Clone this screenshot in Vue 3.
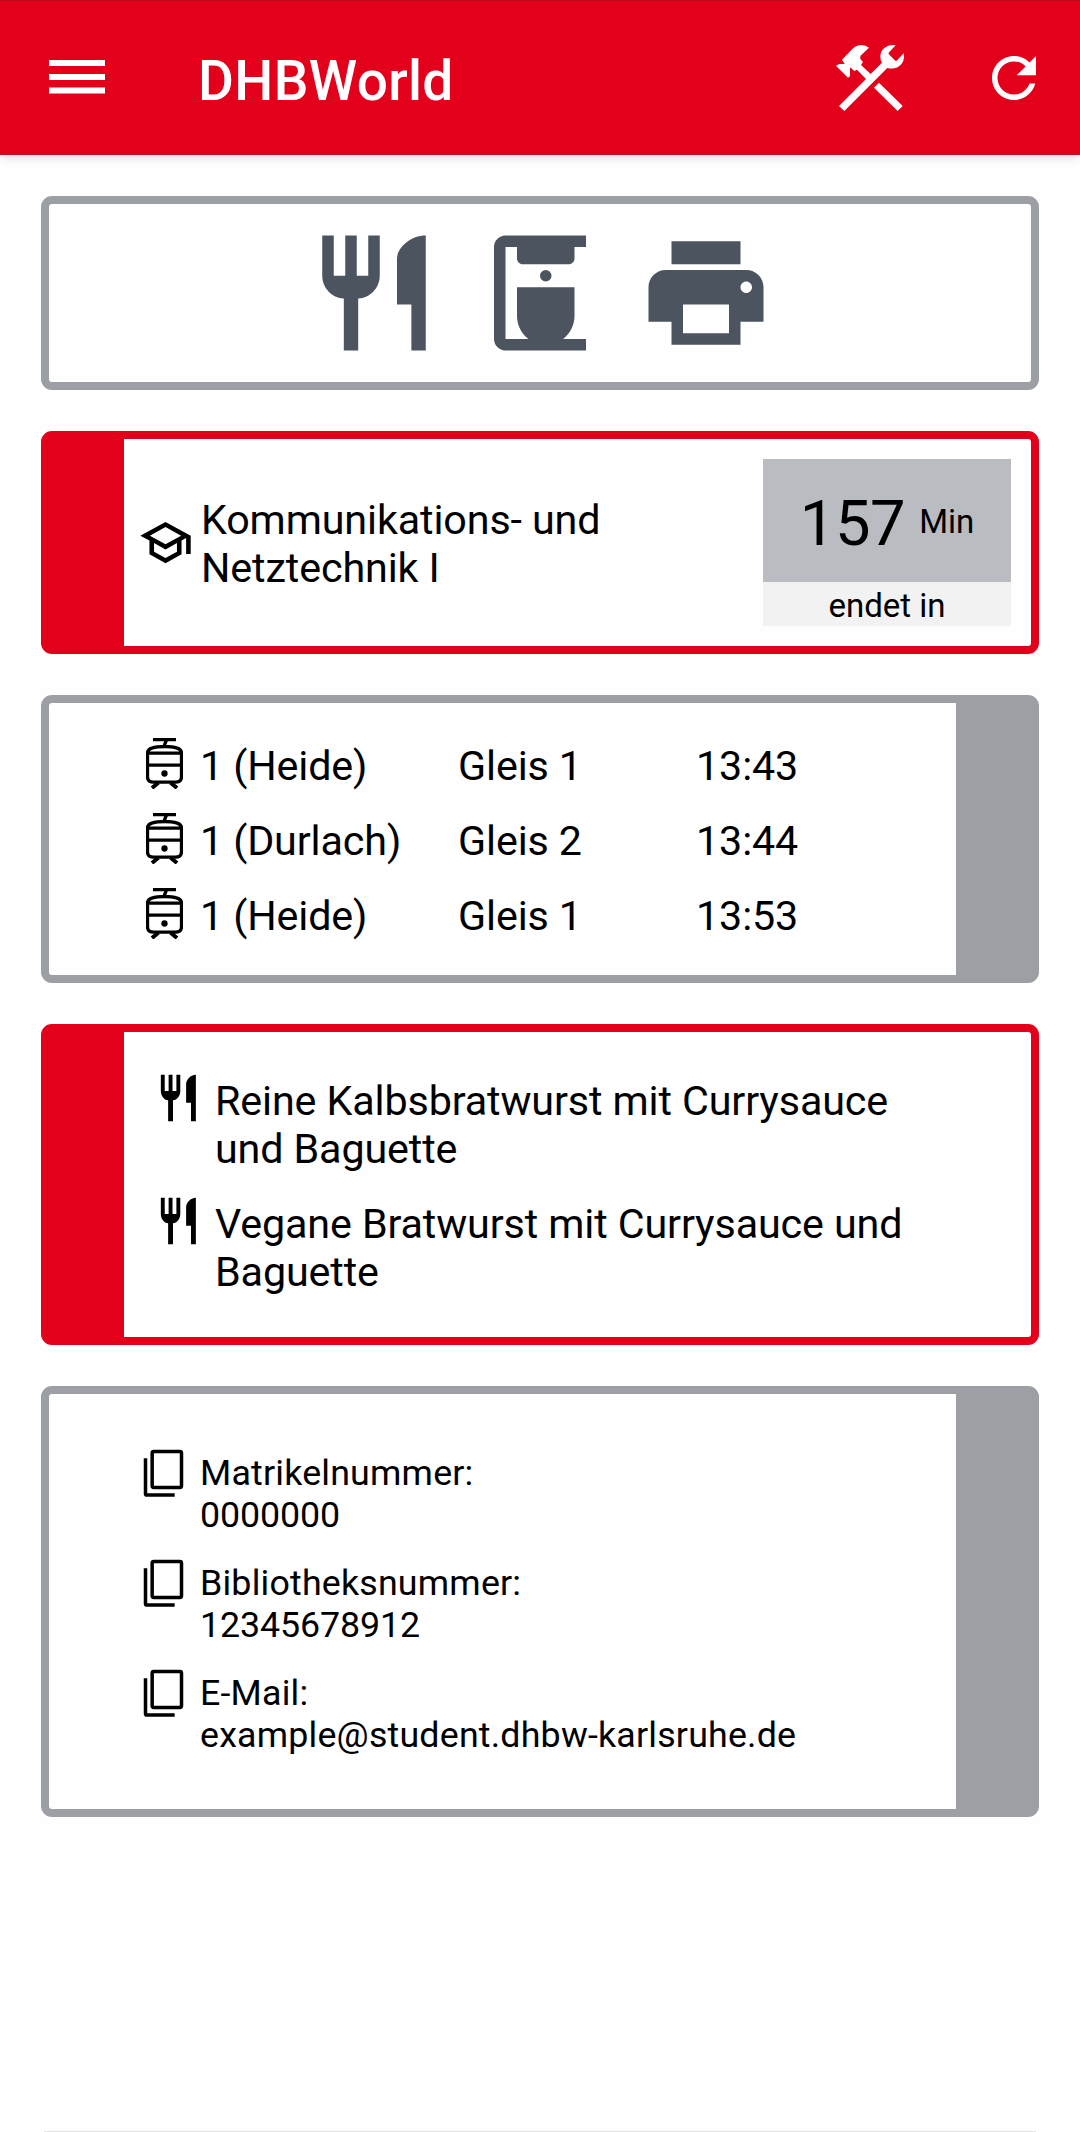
<script setup>
const departures = [
  { line: '1 (Heide)', platform: 'Gleis 1', time: '13:43' },
  { line: '1 (Durlach)', platform: 'Gleis 2', time: '13:44' },
  { line: '1 (Heide)', platform: 'Gleis 1', time: '13:53' },
]
const meals = [
  'Reine Kalbsbratwurst mit Currysauce und Baguette',
  'Vegane Bratwurst mit Currysauce und Baguette',
]
const infos = [
  { label: 'Matrikelnummer:', value: '0000000', numeric: true },
  { label: 'Bibliotheksnummer:', value: '12345678912', numeric: true },
  { label: 'E-Mail:', value: 'example@student.dhbw-karlsruhe.de', numeric: false },
]
const cutlery =
  'M11 9H9V2H7v7H5V2H3v7c0 2.12 1.66 3.84 3.75 3.97V22h2.5v-9.03C11.34 12.84 13 11.12 13 9V2h-2v7zm5-3v8h2.5v8H21V2c-2.76 0-5 2.24-5 4z'
</script>

<template>
  <div class="screen">
    <header class="bar">
      <svg class="menu" viewBox="0 0 56 34"><path d="M0 0h56v6H0zM0 14h56v6H0zM0 27.500h56v6H0z" /></svg>
      <h1>DHBWorld</h1>
      <svg class="tools" viewBox="168 135 204 198">
        <path d="M168 197L178 192H194L186 179L220 144Q231 135 243 135Q258 135 267 143L241 168V177L249 186L243 195L272 222L306 188Q301 180 301 170Q301 153 313 144Q326 133 347 136L326 158V162L346 182H350L371 160Q375 180 364 193Q349 210 322 204L193 333L177 318L258 237L231 209L223 213L210 202V229L204 233Z" />
        <path d="M297 248L368 318L353 333L282 263Z" />
      </svg>
      <svg class="refresh" viewBox="0 0 24 24"><path d="M17.65 6.35C16.2 4.9 14.21 4 12 4c-4.42 0-7.99 3.58-7.99 8s3.57 8 7.99 8c3.73 0 6.84-2.55 7.73-6h-2.08c-.82 2.33-3.04 4-5.65 4-3.31 0-6-2.69-6-6s2.69-6 6-6c1.66 0 3.14.69 4.22 1.78L13 11h7V4l-2.35 2.35z" /></svg>
    </header>

    <main>
      <section class="card shortcuts">
        <svg viewBox="0 0 24 24"><path :d="cutlery" /></svg>
        <svg viewBox="0 0 24 24">
          <path d="M10 20C8.79 19.09 8 17.63 8 16v-5h10v5c0 1.63-.79 3.09-2 4h4v2H6c-1.1 0-2-.9-2-2V4c0-1.1.9-2 2-2h14v2h-2v2c0 .55-.45 1-1 1H9c-.55 0-1-.45-1-1V4H6v16h4z" />
          <circle cx="13" cy="9" r="1" />
        </svg>
        <svg viewBox="0 0 24 24"><path d="M19 8H5c-1.66 0-3 1.34-3 3v6h4v4h12v-4h4v-6c0-1.660-1.340-3-3-3zm-3 11H8v-5h8v5zm3-7c-.55 0-1-.45-1-1s.45-1 1-1 1 .45 1 1-.45 1-1 1zm-1-9H6v4h12V3z" /></svg>
      </section>

      <section class="card red lecture">
        <svg class="cap" viewBox="0 0 24 24"><path d="M12 3L1 9l4 2.180v6L12 21l7-3.820v-6l2-1.090V17h2V9L12 3zm6.820 6L12 12.720 5.180 9 12 5.280 18.820 9zM17 15.990l-5 2.730-5-2.730v-3.720L12 15l5-2.730v3.720z" /></svg>
        <p class="subject">Kommunikations- und Netztechnik I</p>
        <div class="countdown">
          <div class="amount"><span class="number">157</span><span class="unit">Min</span></div>
          <div class="caption">endet in</div>
        </div>
      </section>

      <section class="card grey trams">
        <div v-for="(d, i) in departures" :key="i" class="tram-row">
          <svg class="tram" viewBox="348 175 111 153">
            <path d="M369 179.500H438M409 182L403 197M352.500 295V220Q352.500 200.500 403.500 200.500T454.500 220V291Q454.500 307.500 436 307.500H371Q352.500 307.500 352.500 291ZM352 220.500H455M352 256.500H455" />
            <path class="legs" d="M385 309L366 325M422 309L441 325" />
            <circle cx="403.500" cy="281.500" r="9.500" />
          </svg>
          <span class="line">{{ d.line }}</span>
          <span class="platform">{{ d.platform }}</span>
          <span>{{ d.time }}</span>
        </div>
      </section>

      <section class="card red meals">
        <div v-for="m in meals" :key="m" class="meal">
          <svg viewBox="0 0 24 24" preserveAspectRatio="none"><path :d="cutlery" /></svg>
          <p>{{ m }}</p>
        </div>
      </section>

      <section class="card grey infos">
        <div v-for="n in infos" :key="n.label" class="info">
          <svg viewBox="342 240 117 140">
            <rect x="366.500" y="244.500" width="88" height="108" rx="5" />
            <path d="M346.500 265V371Q346.500 375 350.500 375H434" />
          </svg>
          <p>{{ n.label }}<br /><span :class="{ numeric: n.numeric }">{{ n.value }}</span></p>
        </div>
      </section>
    </main>
    <div class="next-edge"></div>
  </div>
</template>

<style>
body {
  margin: 0;
  background: #fefefe;
}
</style>

<style scoped>
.screen {
  width: 1080px;
  height: 2132px;
  display: flex;
  flex-direction: column;
  overflow: hidden;
  background: #fefefe;
  font-family: Roboto, sans-serif;
  font-size: 41.25px;
  line-height: 48px;
  letter-spacing: -0.12px;
  color: #000;
}
p,
h1 {
  margin: 0;
}
svg {
  display: block;
  flex: none;
}
.bar {
  box-sizing: border-box;
  height: 155px;
  flex: none;
  display: flex;
  align-items: flex-start;
  background: #e2001a;
  border-top: 1px solid #b40a1c;
  border-bottom: 1px solid #c01028;
  box-shadow: 0 2px 10px rgba(0, 0, 0, 0.14);
  fill: #fff;
  color: #fff;
}
.menu {
  width: 56px;
  height: 34px;
  margin: 59px 0 0 49px;
}
h1 {
  width: 638px;
  margin: 48px 0 0 93px;
  font-size: 55px;
  line-height: 64px;
  font-weight: 500;
  letter-spacing: 0.35px;
}
.tools {
  width: 68px;
  height: 66px;
  margin-top: 44px;
}
.refresh {
  width: 66px;
  height: 66px;
  margin: 44px 0 0 77px;
}
main {
  display: flex;
  flex-direction: column;
  gap: 41px;
  padding: 41px 41px 0;
}
.card {
  box-sizing: border-box;
  display: flex;
  border: 8px solid #9c9fa3;
  border-radius: 11px;
  background: #fefefe;
}
.red {
  border-color: #e2001a;
  border-left-width: 83px;
}
.grey {
  border-right-width: 83px;
}
.shortcuts {
  height: 194px;
  justify-content: center;
  align-items: flex-start;
  gap: 28px;
  padding-top: 20px;
  fill: #4b545f;
}
.shortcuts svg {
  width: 138px;
  height: 138px;
}
.lecture {
  height: 223px;
  padding: 20px;
  padding-left: 14px;
}
.cap {
  width: 55px;
  height: 55px;
  margin-top: 56px;
}
.subject {
  width: 562px;
  padding: 37px 120px 0 8px;
  box-sizing: border-box;
}
.countdown {
  width: 248px;
  margin-left: auto;
  font-size: 33px;
  letter-spacing: 0;
}
.amount {
  height: 123px;
  display: flex;
  align-items: center;
  justify-content: center;
  gap: 14px;
  background: #b9bcc1;
}
.number {
  font-size: 63.25px;
  line-height: 74px;
  padding-top: 5px;
  letter-spacing: -0.4px;
}
.unit {
  line-height: 39px;
  padding-top: 2px;
}
.caption {
  box-sizing: border-box;
  height: 44px;
  padding-top: 4px;
  line-height: 39px;
  text-align: center;
  background: #f2f2f2;
}
.trams {
  height: 288px;
  flex-direction: column;
  gap: 27px;
  padding: 39px 0 0 97px;
}
.tram-row {
  display: flex;
  height: 48px;
}
.tram {
  width: 37px;
  height: 51px;
  margin: -4px 17px 0 0;
  fill: none;
  stroke: #000;
  stroke-width: 10px;
}
.tram circle {
  fill: #000;
  stroke: none;
}
.legs {
  stroke-width: 12px;
}
.line {
  width: 258px;
}
.platform {
  width: 238px;
}
.meals {
  height: 321px;
  flex-direction: column;
  gap: 27px;
  padding: 45px 100px 0 31px;
}
.meal {
  display: flex;
}
.meal svg {
  width: 46.7px;
  height: 56px;
  margin: -6.700px 13.300px 0 0;
}
.meal p {
  height: 96px;
}
.infos {
  height: 431px;
  flex-direction: column;
  gap: 26px;
  padding: 58px 0 0 95px;
  font-size: 35.75px;
  line-height: 42px;
  letter-spacing: 0.2px;
}
.numeric {
  letter-spacing: -0.1px;
}
.info {
  display: flex;
}
.info svg {
  width: 39px;
  height: 46.700px;
  margin: -2px 17px 0 0;
  fill: none;
  stroke: #000;
  stroke-width: 10.5px;
  overflow: visible;
}
.next-edge {
  height: 1px;
  margin: auto 44px 0;
  background: #e5e5e5;
}
</style>
